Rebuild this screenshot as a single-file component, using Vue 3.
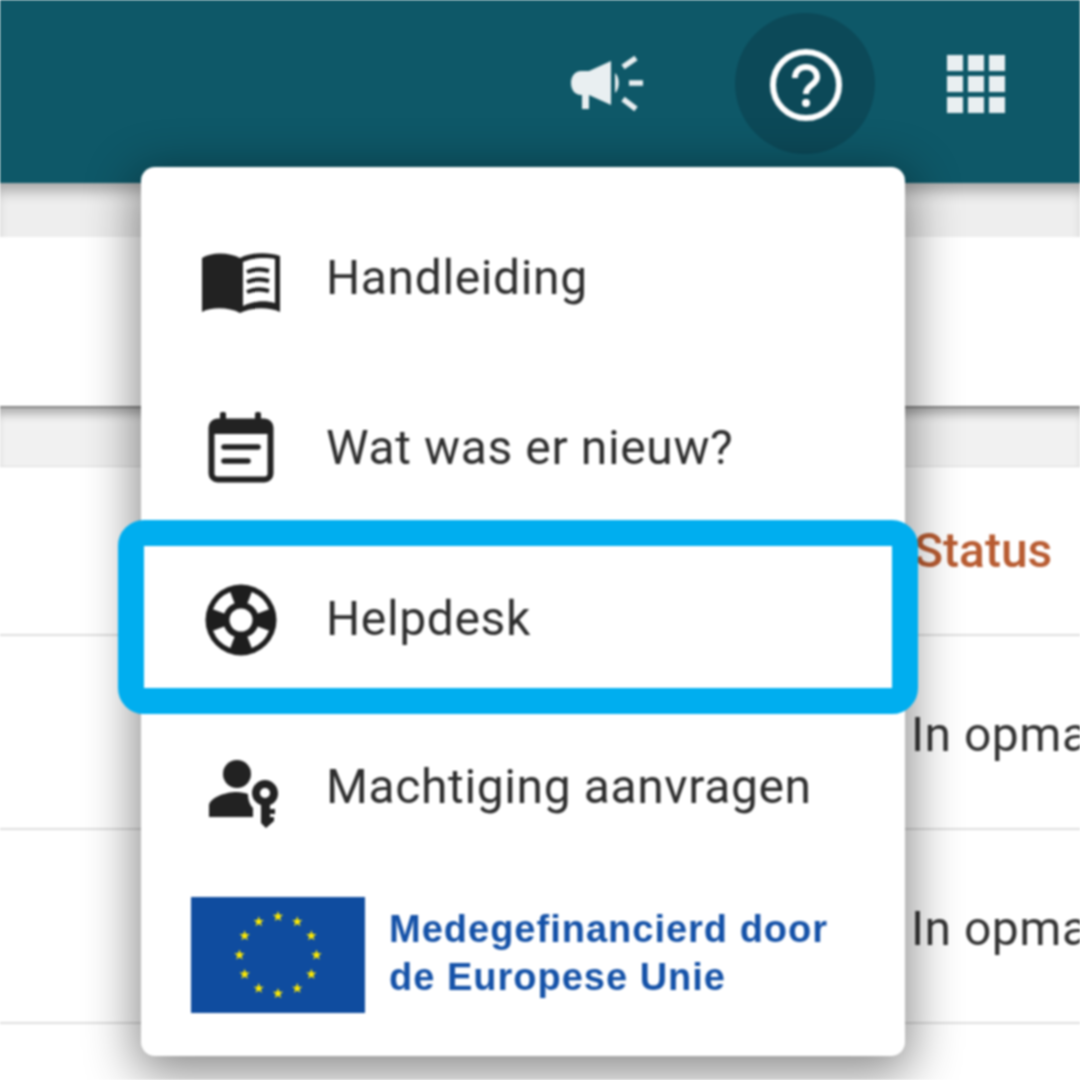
<script setup>
// help menu opened from the top bar, Helpdesk item highlighted
const stars = Array.from({ length: 12 }, (_, i) => {
  const a = (i * Math.PI) / 6
  return { x: 87 + 38.5 * Math.sin(a), y: 58 - 38.5 * Math.cos(a) }
})
const starPoints = '0,-5.5 1.3,-1.7 5.2,-1.7 2.1,0.7 3.2,4.5 0,2.2 -3.2,4.5 -2.1,0.7 -5.2,-1.7 -1.3,-1.7'
const dots = Array.from({ length: 9 })
const buoyAngles = [45, 135, 225, 315]
</script>

<template>
  <div class="page">
    <header class="topbar">
      <button class="tool tool--news">
        <svg width="74" height="58" viewBox="0 0 74 58">
          <path d="M11 16 H19 L41 6 V50 L19 40 V54 H12 V40 H11 C5 40 1 35 1 28 C1 21 5 16 11 16 Z" fill="#e9eff1" />
          <path d="M45 18 C50 22 50 34 45 38 Z" fill="#e9eff1" />
          <path d="M53 12 L66 3 M59 28 H73 M53 44 L66 54" fill="none" stroke="#e9eff1" stroke-width="5.5" />
        </svg>
      </button>
      <button class="tool tool--help">
        <svg class="help-icon" width="72" height="72" viewBox="0 0 72 72">
          <circle cx="36" cy="36" r="33" fill="none" stroke="#fff" stroke-width="6" />
          <path d="M25 29 C25 22 30 18 36 18 C43 18 47 23 47 28 C47 36 36 36 36 45" fill="none" stroke="#fff" stroke-width="6" />
          <circle cx="36" cy="54" r="4" fill="#fff" />
        </svg>
      </button>
      <button class="tool tool--apps">
        <span class="apps">
          <i v-for="(d, i) in dots" :key="i" />
        </span>
      </button>
    </header>

    <div class="band" />
    <section class="panel" />
    <div class="band band--head" />

    <div class="row row--head"><span class="status">Status</span></div>
    <div class="row"><span>In opmaak</span></div>
    <div class="row"><span>In opmaak</span></div>
    <div class="row" />

    <nav class="menu">
      <a class="item">
        <span class="item-icon">
          <svg class="icon-book" width="80" height="64" viewBox="0 0 80 64">
            <path d="M1 7 C10 1 28 1 39 7 V62 C28 56 10 56 1 61 Z" fill="#222" />
            <path d="M39 7 C50 1 68 1 79 5 V61 C68 56 50 56 39 62 Z" fill="#222" />
            <path d="M42 11 C50 7 64 6 74 8 V52 C64 49 52 50 42 55 Z" fill="#fff" />
            <path d="M46 21 C53 18 62 18 68 20 M46 31 C53 28 62 28 68 30 M46 41 C53 38 62 38 68 40" fill="none" stroke="#222" stroke-width="4" />
          </svg>
        </span>
        <span>Handleiding</span>
      </a>
      <a class="item">
        <span class="item-icon">
          <svg width="66" height="72" viewBox="0 0 66 72">
            <rect x="12" y="1" width="6" height="12" rx="2" fill="#222" />
            <rect x="47" y="1" width="6" height="12" rx="2" fill="#222" />
            <rect x="3.5" y="10.5" width="59" height="58" rx="6" fill="none" stroke="#222" stroke-width="6" />
            <path d="M3 22 V14 C3 11 5 9 8 9 H58 C61 9 63 11 63 14 V23 H3 Z" fill="#222" />
            <path d="M16 36 H50 M16 50 H40" fill="none" stroke="#222" stroke-width="5.5" stroke-linecap="round" />
          </svg>
        </span>
        <span>Wat was er nieuw?</span>
      </a>
      <a class="item item--active">
        <span class="item-icon">
          <svg class="icon-buoy" width="72" height="72" viewBox="0 0 72 72">
            <circle cx="36" cy="36" r="35.5" fill="#1d1d1d" />
            <path
              v-for="a in buoyAngles"
              :key="a"
              d="M23.8 8.6 A30 30 0 0 1 48.2 8.6 L43.3 19.6 A18 18 0 0 0 28.7 19.6 Z"
              :transform="`rotate(${a} 36 36)`"
              fill="#fff"
            />
            <circle cx="36" cy="36" r="11.5" fill="#fff" />
          </svg>
        </span>
        <span class="label-help">Helpdesk</span>
      </a>
      <a class="item">
        <span class="item-icon">
          <svg class="icon-key" width="70" height="70" viewBox="0 0 70 70">
            <circle cx="29" cy="16" r="14" fill="#222" />
            <path d="M1 59 V48 C1 40 17 34 29 34 C33 34 37 35 40 36 C40 42 42 47 45 50 V59 Z" fill="#222" />
            <path d="M57 22 C64 22 70 28 70 35 C70 41 67 45 62 47 V51 H67 V56 H62 V59 H66 V63 L58 70 L53 65 V47 C48 45 44 41 44 35 C44 28 50 22 57 22 Z M57 30 A5 5 0 1 0 57 40 A5 5 0 1 0 57 30 Z" fill="#222" fill-rule="evenodd" />
          </svg>
        </span>
        <span>Machtiging aanvragen</span>
      </a>
      <div class="eu">
        <svg class="eu-flag" width="174" height="116" viewBox="0 0 174 116">
          <rect width="174" height="116" fill="#0f4c9f" />
          <polygon
            v-for="(s, i) in stars"
            :key="i"
            :points="starPoints"
            :transform="`translate(${s.x} ${s.y})`"
            fill="#ffeb00"
          />
        </svg>
        <p class="eu-text">Medegefinancierd door<br />de Europese Unie</p>
      </div>
    </nav>
  </div>
</template>

<style>
html,
body {
  margin: 0;
  background: #fff;
}
</style>

<style scoped>
.page {
  position: relative;
  width: 1080px;
  height: 1080px;
  overflow: hidden;
  background: #fff;
  font-family: Roboto, sans-serif;
  color: #333;
  filter: blur(0.9px);
}

/* top bar */
.topbar {
  height: 183px;
  box-sizing: border-box;
  padding: 13px 34px 0 0;
  display: flex;
  justify-content: flex-end;
  align-items: flex-start;
  background: #0e5868;
}
.tool {
  width: 140px;
  height: 141px;
  padding: 0;
  border: 0;
  border-radius: 50%;
  background: transparent;
  display: flex;
  align-items: center;
  justify-content: center;
}
.tool--news {
  margin-right: 58px;
}
.tool--help {
  margin-right: 31px;
  background: #0c4958;
}
.help-icon {
  margin: 2px 0 0 2px;
}
.apps {
  width: 58px;
  display: grid;
  grid-template-columns: repeat(3, 16px);
  grid-auto-rows: 16px;
  gap: 5px;
}
.apps i {
  background: #e9eff1;
}

/* page behind the menu */
.band {
  height: 54px;
  background: #eee;
  box-shadow: inset 0 14px 14px -6px rgba(0, 0, 0, 0.3);
}
.band--head {
  height: 59px;
  border-bottom: 1px solid #dcdcdc;
  box-sizing: border-box;
  box-shadow: inset 0 10px 10px -4px rgba(0, 0, 0, 0.28);
  background: #f1f1f1;
}
.panel {
  height: 171px;
  background: #fff;
  border-bottom: 2px solid #888;
  box-sizing: border-box;
}
.row {
  height: 194px;
  box-sizing: border-box;
  padding: 5px 0 0 911px;
  display: flex;
  align-items: center;
  white-space: nowrap;
  font-size: 48px;
  letter-spacing: 0.5px;
  border-bottom: 2px solid #dedede;
}
.row--head {
  height: 169px;
  align-items: flex-start;
  padding-top: 55px;
}
.status {
  margin-left: 3px;
  color: #b85c32;
  font-weight: 500;
  letter-spacing: 0;
}

/* help menu */
.menu {
  position: absolute;
  left: 141px;
  top: 167px;
  width: 764px;
  height: 889px;
  box-sizing: border-box;
  padding-top: 26px;
  background: #fff;
  border-radius: 14px;
  box-shadow: 0 12px 50px 6px rgba(0, 0, 0, 0.46);
}
.item {
  position: relative;
  height: 169.5px;
  display: flex;
  align-items: center;
  font-size: 48px;
  letter-spacing: 0.62px;
  color: #2e2e2e;
}
.label-help {
  margin-top: 3px;
}
.item-icon {
  width: 185px;
  padding: 0 25px 0 40px;
  box-sizing: border-box;
  display: flex;
  justify-content: center;
  flex-shrink: 0;
}
.icon-book {
  margin-top: 10px;
}
.icon-buoy {
  margin-top: 6px;
}
.icon-key {
  margin: 14px 0 0 4px;
}
.item--active::after {
  content: "";
  position: absolute;
  inset: -12px -13px -12px -23px;
  border: 26px solid #00aeef;
  border-radius: 26px;
}
.eu {
  margin: 24px 0 0 50px;
  display: flex;
  align-items: flex-start;
  gap: 24px;
}
.eu-flag {
  flex-shrink: 0;
  margin-top: 2px;
}
.eu-text {
  margin: 10px 0 0;
  font-family: "Liberation Sans", Arial, sans-serif;
  font-weight: 700;
  font-size: 38px;
  letter-spacing: 1px;
  line-height: 48px;
  color: #1552a8;
  white-space: nowrap;
}
</style>
